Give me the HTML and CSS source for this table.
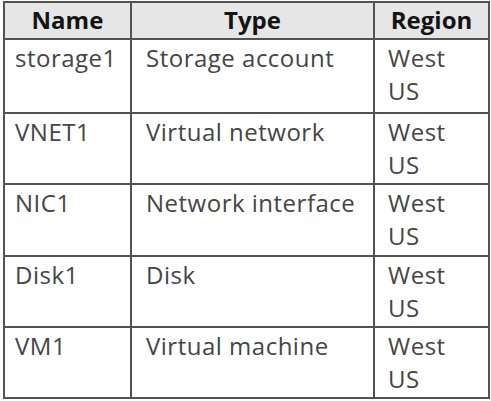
FILE: index.html
```html
<!DOCTYPE html>
<html>
<head>
<meta charset="utf-8">
<link rel="stylesheet" href="styles.css">
</head>
<body>
<table class="grid">
  <thead>
    <tr class="head">
      <th class="name">Name</th>
      <th class="type">Type</th>
      <th class="region">Region</th>
    </tr>
  </thead>
  <tbody>
    <tr class="row row-first">
      <td class="name">storage1</td>
      <td class="type">Storage account</td>
      <td class="region">West<br>US</td>
    </tr>
    <tr class="row">
      <td class="name">VNET1</td>
      <td class="type">Virtual network</td>
      <td class="region">West<br>US</td>
    </tr>
    <tr class="row row-mid">
      <td class="name">NIC1</td>
      <td class="type">Network interface</td>
      <td class="region">West<br>US</td>
    </tr>
    <tr class="row">
      <td class="name">Disk1</td>
      <td class="type">Disk</td>
      <td class="region">West<br>US</td>
    </tr>
    <tr class="row">
      <td class="name">VM1</td>
      <td class="type">Virtual machine</td>
      <td class="region">West<br>US</td>
    </tr>
  </tbody>
</table>
</body>
</html>
```
FILE: styles.css
```css
html, body {
  margin: 0;
  padding: 0;
  background: #ffffff;
}

body {
  padding: 1px 0 0 3px;
  font-family: "Open Sans", "Noto Sans", sans-serif;
  font-size: 24px;
  line-height: 33px;
  color: #454545;
}

.grid {
  border-collapse: separate;
  border-spacing: 0;
  table-layout: fixed;
  width: 487px;
  border-left: 2px solid #525252;
  border-top: 2px solid #525252;
}

.grid th,
.grid td {
  box-sizing: border-box;
  border-right: 2px solid #525252;
  border-bottom: 2px solid #525252;
  padding: 0;
}

.grid .name { width: 127px; }
.grid .type { width: 243px; }
.grid .region { width: 115px; }

.head th {
  height: 37px;
  background: #e6e6e6;
  color: #141414;
  font-weight: 700;
  text-align: center;
  vertical-align: top;
  padding-top: 0;
}

.row td {
  height: 71px;
  vertical-align: top;
  padding-top: 1px;
  letter-spacing: 0.5px;
}

.row-first td { height: 74px; }
.row-mid td { height: 72px; }

.row td.name { padding-left: 10px; }
.row td.type { padding-left: 14px; }
.row td.region { padding-left: 13px; }
```
